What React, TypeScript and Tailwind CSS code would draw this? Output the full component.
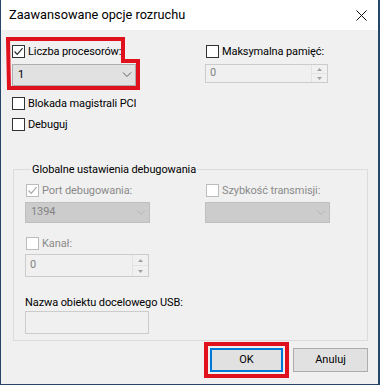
import React from "react";

const font = { fontFamily: 'Roboto, "Noto Sans", sans-serif' };

function Check({ checked, disabled }: { checked?: boolean; disabled?: boolean }) {
  return (
    <div
      className={`w-[13px] h-[13px] shrink-0 border bg-white flex items-center justify-center ${
        disabled ? "border-[#bcbcbc]" : "border-[#333333]"
      }`}
    >
      {checked && (
        <svg width="11" height="11" viewBox="0 0 11 11">
          <path
            d="M1.5 5.5 L4.2 8.3 L9.6 2.2"
            fill="none"
            stroke={disabled ? "#a8a8a8" : "#2b2b2b"}
            strokeWidth="1.2"
          />
        </svg>
      )}
    </div>
  );
}

function Chevron({ disabled }: { disabled?: boolean }) {
  return (
    <svg width="10" height="6" viewBox="0 0 10 6">
      <path d="M1 0.5 L5 4.5 L9 0.5" fill="none" stroke={disabled ? "#b4b4b4" : "#606060"} strokeWidth="1" />
    </svg>
  );
}

function Combo({ value, disabled, w, h }: { value: string; disabled?: boolean; w: string; h: string }) {
  return (
    <div
      className={`${w} ${h} border flex items-center justify-between pl-[5px] pr-[3px] text-[11px] tracking-[-0.1px] ${
        disabled ? "bg-[#cccccc] border-[#bfbfbf] text-[#838383]" : "bg-[#e1e1e1] border-[#adadad] text-black"
      }`}
    >
      <span>{value}</span>
      <Chevron disabled={disabled} />
    </div>
  );
}

function Spin({ w, h }: { w: string; h: string }) {
  return (
    <div className={`${w} ${h} border border-[#cccccc] bg-[#f0f0f0] flex text-[11px] text-[#838383]`}>
      <div className="flex-1 flex items-center pl-[4px]">0</div>
      <div className="w-[16px] flex flex-col border-l border-[#e3e3e3]">
        <div className="flex-1 flex items-center justify-center border-b border-[#e3e3e3]">
          <svg width="5" height="3" viewBox="0 0 5 3">
            <path d="M0 3 L2.5 0 L5 3 Z" fill="#a0a0a0" />
          </svg>
        </div>
        <div className="flex-1 flex items-center justify-center">
          <svg width="5" height="3" viewBox="0 0 5 3">
            <path d="M0 0 L2.5 3 L5 0 Z" fill="#a0a0a0" />
          </svg>
        </div>
      </div>
    </div>
  );
}

function CheckRow({
  label,
  checked,
  disabled,
}: {
  label: string;
  checked?: boolean;
  disabled?: boolean;
}) {
  return (
    <div className="flex items-center h-[13px] gap-[3px]">
      <Check checked={checked} disabled={disabled} />
      <span
        className={`text-[11px] tracking-[-0.1px] leading-[13px] whitespace-nowrap ${
          disabled ? "text-[#8a8a8a]" : "text-black"
        }`}
      >
        {label}
      </span>
    </div>
  );
}

export default function App() {
  return (
    <div
      style={font}
      className="relative w-[380px] h-[385px] bg-[#f0f0f0] border-l border-r-2 border-b border-[#24466b] flex flex-col overflow-hidden"
    >
      {/* title bar */}
      <div className="h-[30px] bg-white flex items-center justify-between pl-[8px] pr-[11px] shrink-0">
        <span className="text-[12.75px] text-black">Zaawansowane opcje rozruchu</span>
        <svg width="11" height="11" viewBox="0 0 11 11">
          <path d="M0.5 0.5 L10.5 10.5 M10.5 0.5 L0.5 10.5" stroke="#111" strokeWidth="1" />
        </svg>
      </div>

      {/* top section */}
      <div className="flex pl-[11px] pt-[15px]">
        <div className="w-[193px] flex flex-col">
          <CheckRow label="Liczba procesorów:" checked />
          <div className="mt-[6px]">
            <Combo value="1" w="w-[124px]" h="h-[22px]" />
          </div>
          <div className="mt-[11px]">
            <CheckRow label="Blokada magistrali PCI" />
          </div>
          <div className="mt-[8px]">
            <CheckRow label="Debuguj" />
          </div>
        </div>
        <div className="flex flex-col">
          <div className="pl-[1px]">
            <CheckRow label="Maksymalna pamięć:" />
          </div>
          <div className="mt-[6px]">
            <Spin w="w-[123px]" h="h-[19px]" />
          </div>
        </div>
      </div>

      {/* group */}
      <fieldset className="ml-[12px] mr-[10px] mt-[32px] border border-[#dcdcdc] pl-[11px] pb-[6px]">
        <legend className="ml-[6px] px-[1px] text-[11px] tracking-[-0.1px] leading-[13px] text-black">
          Globalne ustawienia debugowania
        </legend>
        <div className="flex mt-[8px]">
          <div className="w-[180px] flex flex-col">
            <div className="pl-[1px]">
              <CheckRow label="Port debugowania:" checked disabled />
            </div>
            <div className="mt-[5px]">
              <Combo value="1394" disabled w="w-[125px]" h="h-[21px]" />
            </div>
          </div>
          <div className="flex flex-col">
            <div className="pl-[1px]">
              <CheckRow label="Szybkość transmisji:" disabled />
            </div>
            <div className="mt-[5px]">
              <Combo value="" disabled w="w-[125px]" h="h-[21px]" />
            </div>
          </div>
        </div>
        <div className="mt-[14px] pl-[1px]">
          <CheckRow label="Kanał:" disabled />
        </div>
        <div className="mt-[4px]">
          <Spin w="w-[124px]" h="h-[23px]" />
        </div>
        <div className="mt-[19px] text-[11px] tracking-[-0.1px] leading-[13px] text-black">
          Nazwa obiektu docelowego USB:
        </div>
        <div className="mt-[2px] w-[124px] h-[23px] border border-[#cccccc] bg-[#f0f0f0]" />
      </fieldset>

      {/* buttons */}
      <div className="flex justify-end items-center pr-[10px] mt-[1px] gap-[4px]">
        <div className="border-4 border-[#e0101d] p-[2px]">
          <div className="w-[73px] h-[24px] border-2 border-[#0078d7] bg-[#e1e1e1] flex items-center justify-center text-[11px] text-black">
            OK
          </div>
        </div>
        <div className="w-[75px] h-[24px] border border-[#adadad] bg-[#e1e1e1] flex items-center justify-center text-[11px] text-black">
          Anuluj
        </div>
      </div>

      {/* red annotation */}
      <svg className="absolute left-0 top-0 pointer-events-none" width="380" height="385">
        <path
          d="M8 39 H123 V61 H138 V88 H9 Z"
          fill="none"
          stroke="#e0101d"
          strokeWidth="4"
          transform="translate(-1,0)"
        />
      </svg>
    </div>
  );
}
